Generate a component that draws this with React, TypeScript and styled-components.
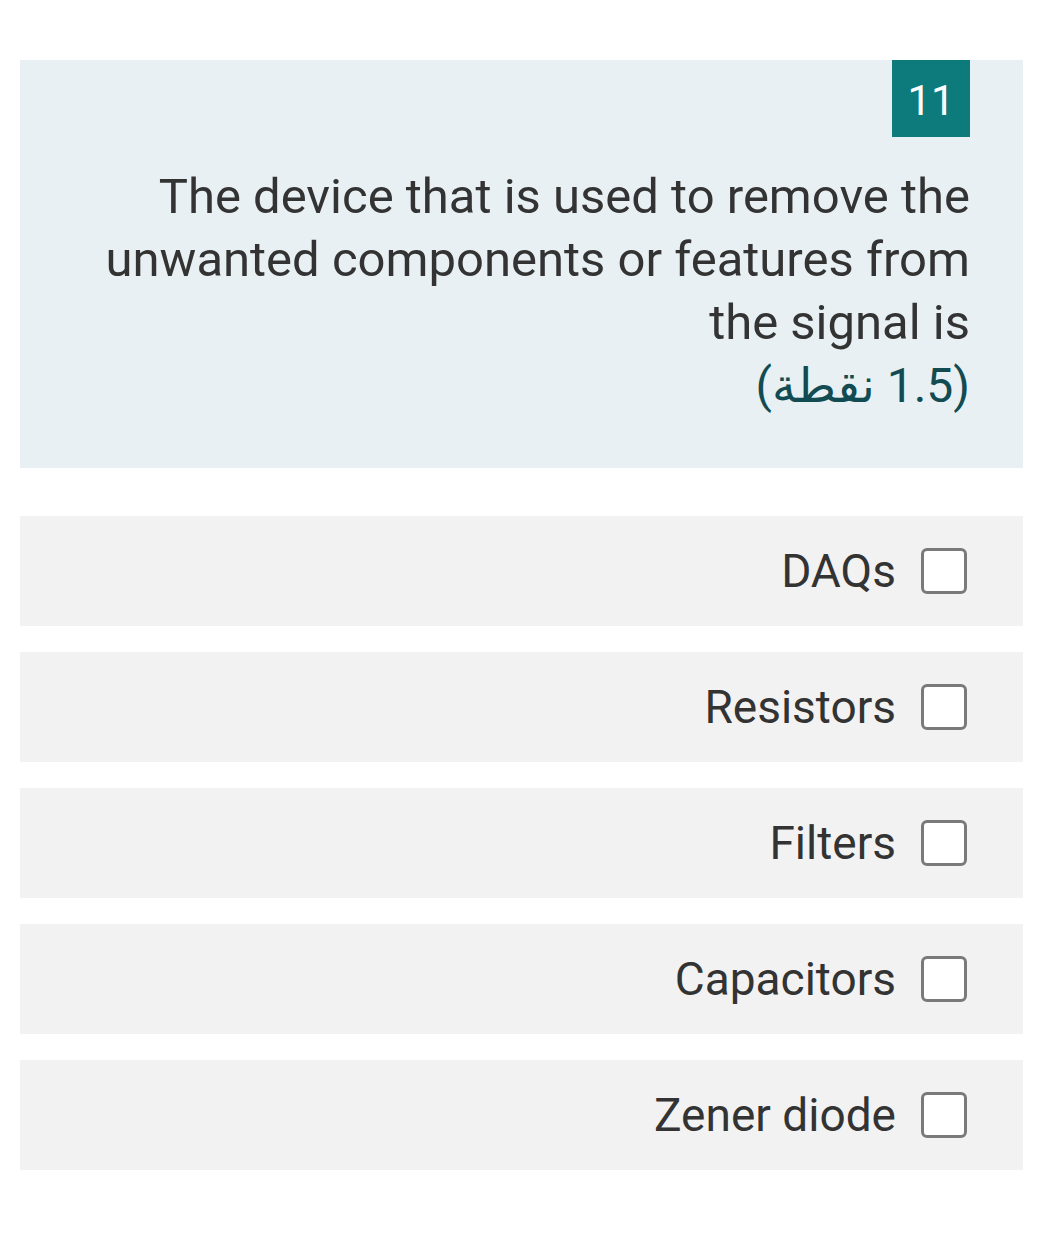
import React from "react";
import styled, { createGlobalStyle } from "styled-components";

const Global = createGlobalStyle`
  body { margin: 0; background: #ffffff; font-family: Roboto, "Noto Sans", Arial, sans-serif; }
`;

const Page = styled.div`
  width: 1003px;
  margin-left: 20px;
  padding-top: 60px;
  padding-bottom: 88px;
  display: flex;
  flex-direction: column;
`;

const QuestionCard = styled.div`
  background: #e8f0f3;
  padding: 0 53px 51px 53px;
  display: flex;
  flex-direction: column;
  align-items: flex-end;
`;

const Badge = styled.div`
  width: 78px;
  height: 77px;
  box-sizing: border-box;
  padding-top: 4px;
  background: #0d7a7b;
  color: #ffffff;
  font-size: 42px;
  display: flex;
  align-items: center;
  justify-content: center;
  margin-bottom: 28px;
`;

const QuestionText = styled.div`
  font-size: 49px;
  line-height: 63px;
  color: #333333;
  text-align: right;
`;

const Points = styled.div`
  direction: rtl;
  font-size: 48px;
  line-height: 63px;
  color: #124c52;
  font-family: Roboto, "Noto Sans", "DejaVu Sans", sans-serif;
`;

const Options = styled.div`
  margin-top: 48px;
  display: flex;
  flex-direction: column;
  gap: 26px;
`;

const OptionRow = styled.label`
  height: 110px;
  background: #f2f2f2;
  display: flex;
  align-items: center;
  justify-content: flex-end;
  gap: 25px;
  padding-right: 56px;
  box-sizing: border-box;
`;

const OptionText = styled.span`
  font-size: 46px;
  color: #333333;
`;

const Box = styled.span`
  width: 46px;
  height: 46px;
  box-sizing: border-box;
  border: 3px solid #7a7a7a;
  border-radius: 6px;
  background: #ffffff;
  flex-shrink: 0;
`;

const options = ["DAQs", "Resistors", "Filters", "Capacitors", "Zener diode"];

export default function App() {
  return (
    <>
      <Global />
      <Page>
        <QuestionCard>
          <Badge>11</Badge>
          <QuestionText>
            The device that is used to remove the
            <br />
            unwanted components or features from
            <br />
            the signal is
          </QuestionText>
          <Points>(1.5 نقطة)</Points>
        </QuestionCard>
        <Options>
          {options.map((o) => (
            <OptionRow key={o}>
              <OptionText>{o}</OptionText>
              <Box />
            </OptionRow>
          ))}
        </Options>
      </Page>
    </>
  );
}
